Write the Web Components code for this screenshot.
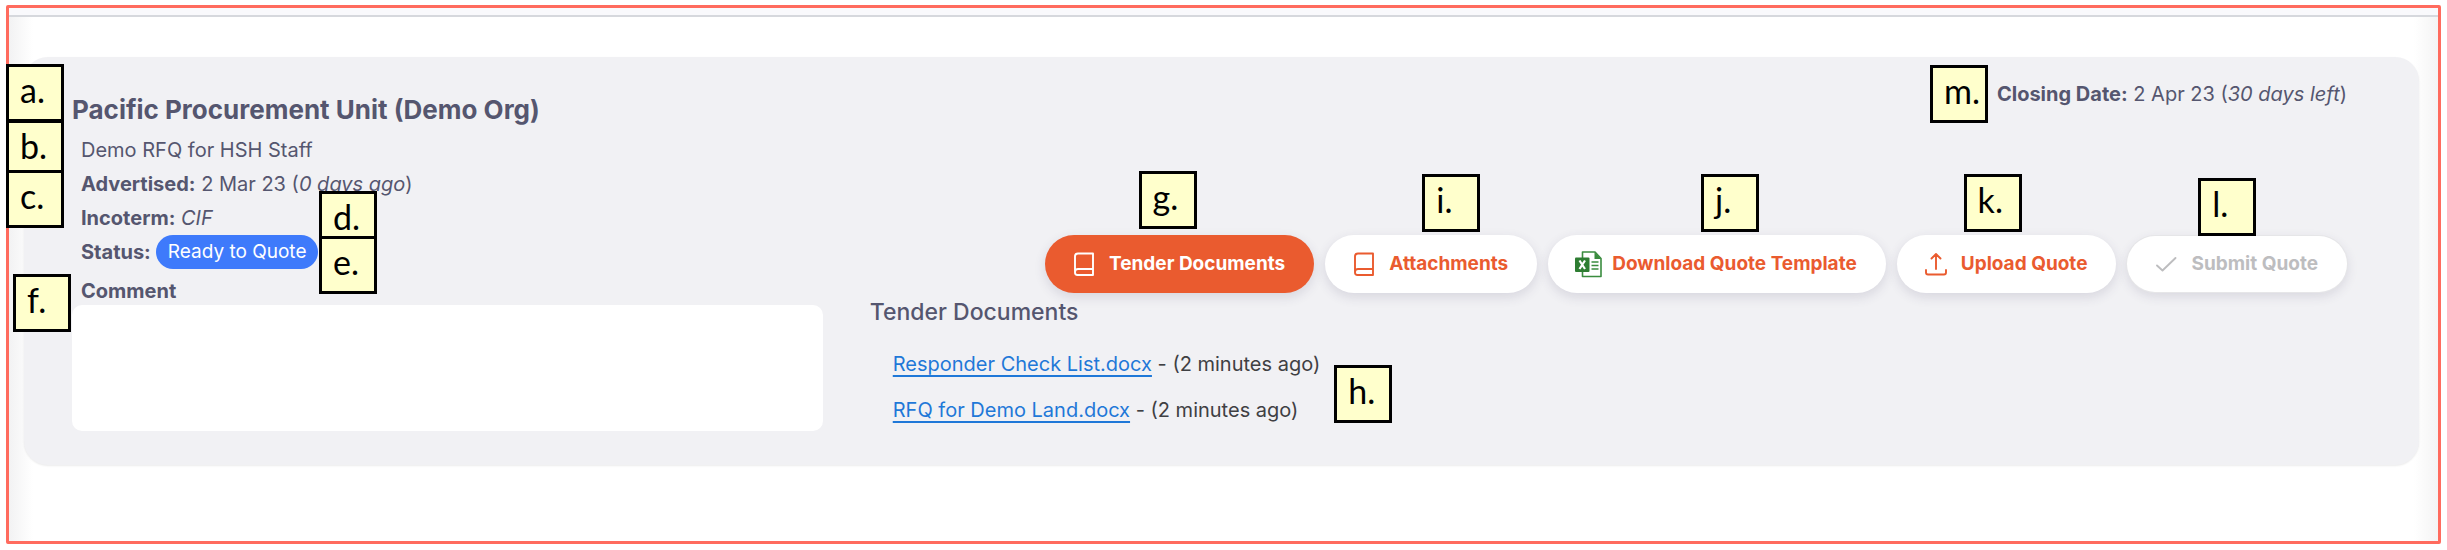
<!DOCTYPE html>
<html lang="en">
<head>
<meta charset="utf-8">
<title>Request for quote</title>
<style>
  body { margin: 0; padding: 5px 6px 6px; background: #fff; font-family: Inter, "Liberation Sans", sans-serif; font-size: 20px; color: #55566f; }
</style>
</head>
<body>
<rfq-page></rfq-page>

<template id="page-tpl">
  <style>
    :host { display: block; box-sizing: border-box; min-height: calc(100vh - 11px); border: 3px solid #ff6b5e; border-radius: 2px;
      background: linear-gradient(90deg, #f2f2f3, #fff 24px, #fff calc(100% - 24px), #f4f4f4); }
    header { height: 7px; background: #f9f9fc; border-bottom: 2px solid #d6d8dd; }
    main { padding: 40px 19px 0 15px; }
  </style>
  <header></header>
  <main><rfq-card></rfq-card></main>
</template>

<template id="card-tpl">
  <style>
    :host { display: flex; gap: 47px; padding: 20px 72px 32px 48px; border-radius: 24px; background: #f1f1f4; box-shadow: 0 1px 2px rgba(0,0,0,.08); }
    .info { flex: 0 0 33%; padding-top: 17px; position: relative; }
    h1 { margin: 0 0 7px; font-size: 26px; line-height: 32px; font-weight: 700; white-space: nowrap; }
    .rows { padding-left: 9px; }
    p { margin: 0; line-height: 34px; white-space: nowrap; }
    b, label { font-weight: 700; }
    .status { display: flex; align-items: center; gap: 5px; position: relative; }
    label { display: block; margin-top: 8px; line-height: 28px; }
    textarea { display: block; box-sizing: border-box; width: 100%; height: 126px; border: 0; border-radius: 10px; resize: none; background: #fff; padding: 12px; font: inherit; color: inherit; }
    .side { flex: 1; min-width: 0; }
    .closing { display: flex; justify-content: flex-end; margin-bottom: 124px; }
    .closing p { position: relative; }
    .actions { display: flex; justify-content: flex-end; gap: 11px; align-items: center; }
    h2 { margin: 3px 0 13px; font-size: 23px; line-height: 32px; font-weight: 500; }
    ul { position: relative; width: max-content; margin: 0; padding: 0 0 0 23px; list-style: none; color: #3f4043; font-size: 20px; line-height: 46px; }
    a { color: #1f78d8; text-underline-offset: 4px; text-decoration-thickness: 2px; text-decoration-skip-ink: none; }
    note-tag { position: absolute; }
    .a { left: -66px; top: -13px; }
    .b { left: -66px; top: 43px; height: 53px; }
    .c { left: -66px; top: 93px; }
    .d { left: 247px; top: 114px; height: 48px; }
    .e { left: 247px; top: 159px; }
    .f { left: -59px; top: 197px; }
    .h { right: -72px; top: 24px; }
    .m { left: -67px; top: -12px; }
  </style>
  <section class="info">
    <h1>Pacific Procurement Unit (Demo Org)</h1>
    <div class="rows">
      <p>Demo RFQ for HSH Staff</p>
      <p><b>Advertised:</b> 2 Mar 23 (<i>0 days ago</i>)</p>
      <p><b>Incoterm:</b> <i>CIF</i></p>
      <p class="status"><b>Status:</b> <status-pill>Ready to Quote</status-pill></p>
      <label for="comment">Comment</label>
    </div>
    <textarea id="comment"></textarea>
    <note-tag class="a">a.</note-tag>
    <note-tag class="b">b.</note-tag>
    <note-tag class="c">c.</note-tag>
    <note-tag class="d">d.</note-tag>
    <note-tag class="e">e.</note-tag>
    <note-tag class="f">f.</note-tag>
  </section>
  <section class="side">
    <div class="closing"><p><b>Closing Date:</b> 2 Apr 23 (<i>30 days left</i>)<note-tag class="m">m.</note-tag></p></div>
    <div class="actions">
      <pill-button icon="book" tag="g." primary>Tender Documents</pill-button>
      <pill-button icon="book" tag="i.">Attachments</pill-button>
      <pill-button icon="excel" tag="j.">Download Quote Template</pill-button>
      <pill-button icon="upload" tag="k.">Upload Quote</pill-button>
      <pill-button icon="check" tag="l." disabled>Submit Quote</pill-button>
    </div>
    <h2>Tender Documents</h2>
    <ul>
      <li><a href="#checklist">Responder Check List.docx</a> - (2 minutes ago)</li>
      <li><a href="#rfq">RFQ for Demo Land.docx</a> - (2 minutes ago)</li>
      <note-tag class="h">h.</note-tag>
    </ul>
  </section>
</template>

<template id="tag-tpl">
  <style>
    :host { display: block; box-sizing: border-box; width: 58px; height: 58px; padding-left: 11px; border: 3px solid #000; background: #ffffcc; color: #000;
      font: 400 34px/46px Lato, "Open Sans", sans-serif; z-index: 1; }
  </style>
  <slot></slot>
</template>

<template id="status-tpl">
  <style>
    :host { display: block; padding: 0 12px; border-radius: 17px; background: #3e7afb; color: #fff; font-size: 19px; line-height: 34px; }
  </style>
  <slot></slot>
</template>

<template id="button-tpl">
  <style>
    :host { display: block; position: relative; }
    button { display: flex; align-items: center; gap: 12px; height: 58px; padding: 0 29px 0 28px; border: 0; border-radius: 29px; background: #fff; color: #ea5b2f;
      font: 700 19px/24px Inter, "Liberation Sans", sans-serif; white-space: nowrap; box-shadow: 0 4px 12px rgba(60,50,90,.14); cursor: pointer; }
    :host([primary]) button { background: #ea5b2f; color: #fff; }
    :host([disabled]) button { height: 56px; color: #bdbdbf; cursor: default; box-shadow: 0 0 0 1px #e6e6e8, 0 4px 12px rgba(60,50,90,.14); }
    svg { display: block; flex: none; width: 24px; height: 28px; overflow: visible; }
    note-tag { position: absolute; left: 50%; top: var(--tag-top, -61px); margin-left: var(--tag-shift, -9px); }
    :host([primary]) note-tag { --tag-top: -64px; --tag-shift: -41px; }
    :host([icon="excel"]) note-tag { --tag-shift: -16px; }
    :host([icon="upload"]) note-tag { --tag-shift: -43px; }
    :host([disabled]) note-tag { --tag-top: -58px; --tag-shift: -39px; }
  </style>
  <button type="button"><span class="icon"></span><span><slot></slot></span></button>
  <note-tag></note-tag>
</template>

<script>
  const ICONS = {
    book: `<svg viewBox="0 0 24 28" fill="none" stroke="currentColor" stroke-width="1.9" stroke-linejoin="round" stroke-linecap="round"><path d="M20 19V3.500H5a3 3 0 0 0-3 3V22.500a2.500 2.500 0 0 0 2.500 2.500H20M20 19H5a3 3 0 0 0-3 3M20 19V25" /></svg>`,
    excel: `<svg viewBox="0 0 24 28"><path d="M6.500 2H19L25 8.500V26.500H6.500Z" fill="#fff" stroke="#3a8c3f" stroke-width="1.600" stroke-linejoin="round"/><path d="M18.500 2V9H25Z" fill="#3a8c3f"/><path d="M15.500 12H22.500M15.500 15.500H22.500M15.500 19H22.500" stroke="#3a8c3f" stroke-width="1.600"/><rect x="-1" y="7.500" width="14.500" height="14.500" rx="1" fill="#2e7d32"/><path d="M3.500 10.500L9 19M9 10.500L3.500 19" stroke="#fff" stroke-width="2.200"/></svg>`,
    upload: `<svg viewBox="0 0 24 28" fill="none" stroke="currentColor" stroke-width="1.900" stroke-linecap="round" stroke-linejoin="round"><path d="M11 19V4M6.500 8.500L11 4L15.500 8.500M1 20V22.500a2 2 0 0 0 2 2H19a2 2 0 0 0 2-2V20"/></svg>`,
    check: `<svg viewBox="0 0 24 28" fill="none" stroke="currentColor" stroke-width="1.900" stroke-linecap="round" stroke-linejoin="round"><path d="M2 15.500L7.500 20.500L20.500 8"/></svg>`
  };

  class Templated extends HTMLElement {
    constructor() {
      super();
      this.attachShadow({ mode: 'open' })
        .append(document.getElementById(this.constructor.template).content.cloneNode(true));
    }
  }

  class NoteTag extends Templated { static template = 'tag-tpl'; }
  class StatusPill extends Templated { static template = 'status-tpl'; }
  class PillButton extends Templated {
    static template = 'button-tpl';
    connectedCallback() {
      this.shadowRoot.querySelector('.icon').innerHTML = ICONS[this.getAttribute('icon')];
      this.shadowRoot.querySelector('button').disabled = this.hasAttribute('disabled');
      this.shadowRoot.querySelector('note-tag').textContent = this.getAttribute('tag');
    }
  }
  class RfqCard extends Templated { static template = 'card-tpl'; }
  class RfqPage extends Templated { static template = 'page-tpl'; }

  customElements.define('note-tag', NoteTag);
  customElements.define('status-pill', StatusPill);
  customElements.define('pill-button', PillButton);
  customElements.define('rfq-card', RfqCard);
  customElements.define('rfq-page', RfqPage);
</script>
</body>
</html>
